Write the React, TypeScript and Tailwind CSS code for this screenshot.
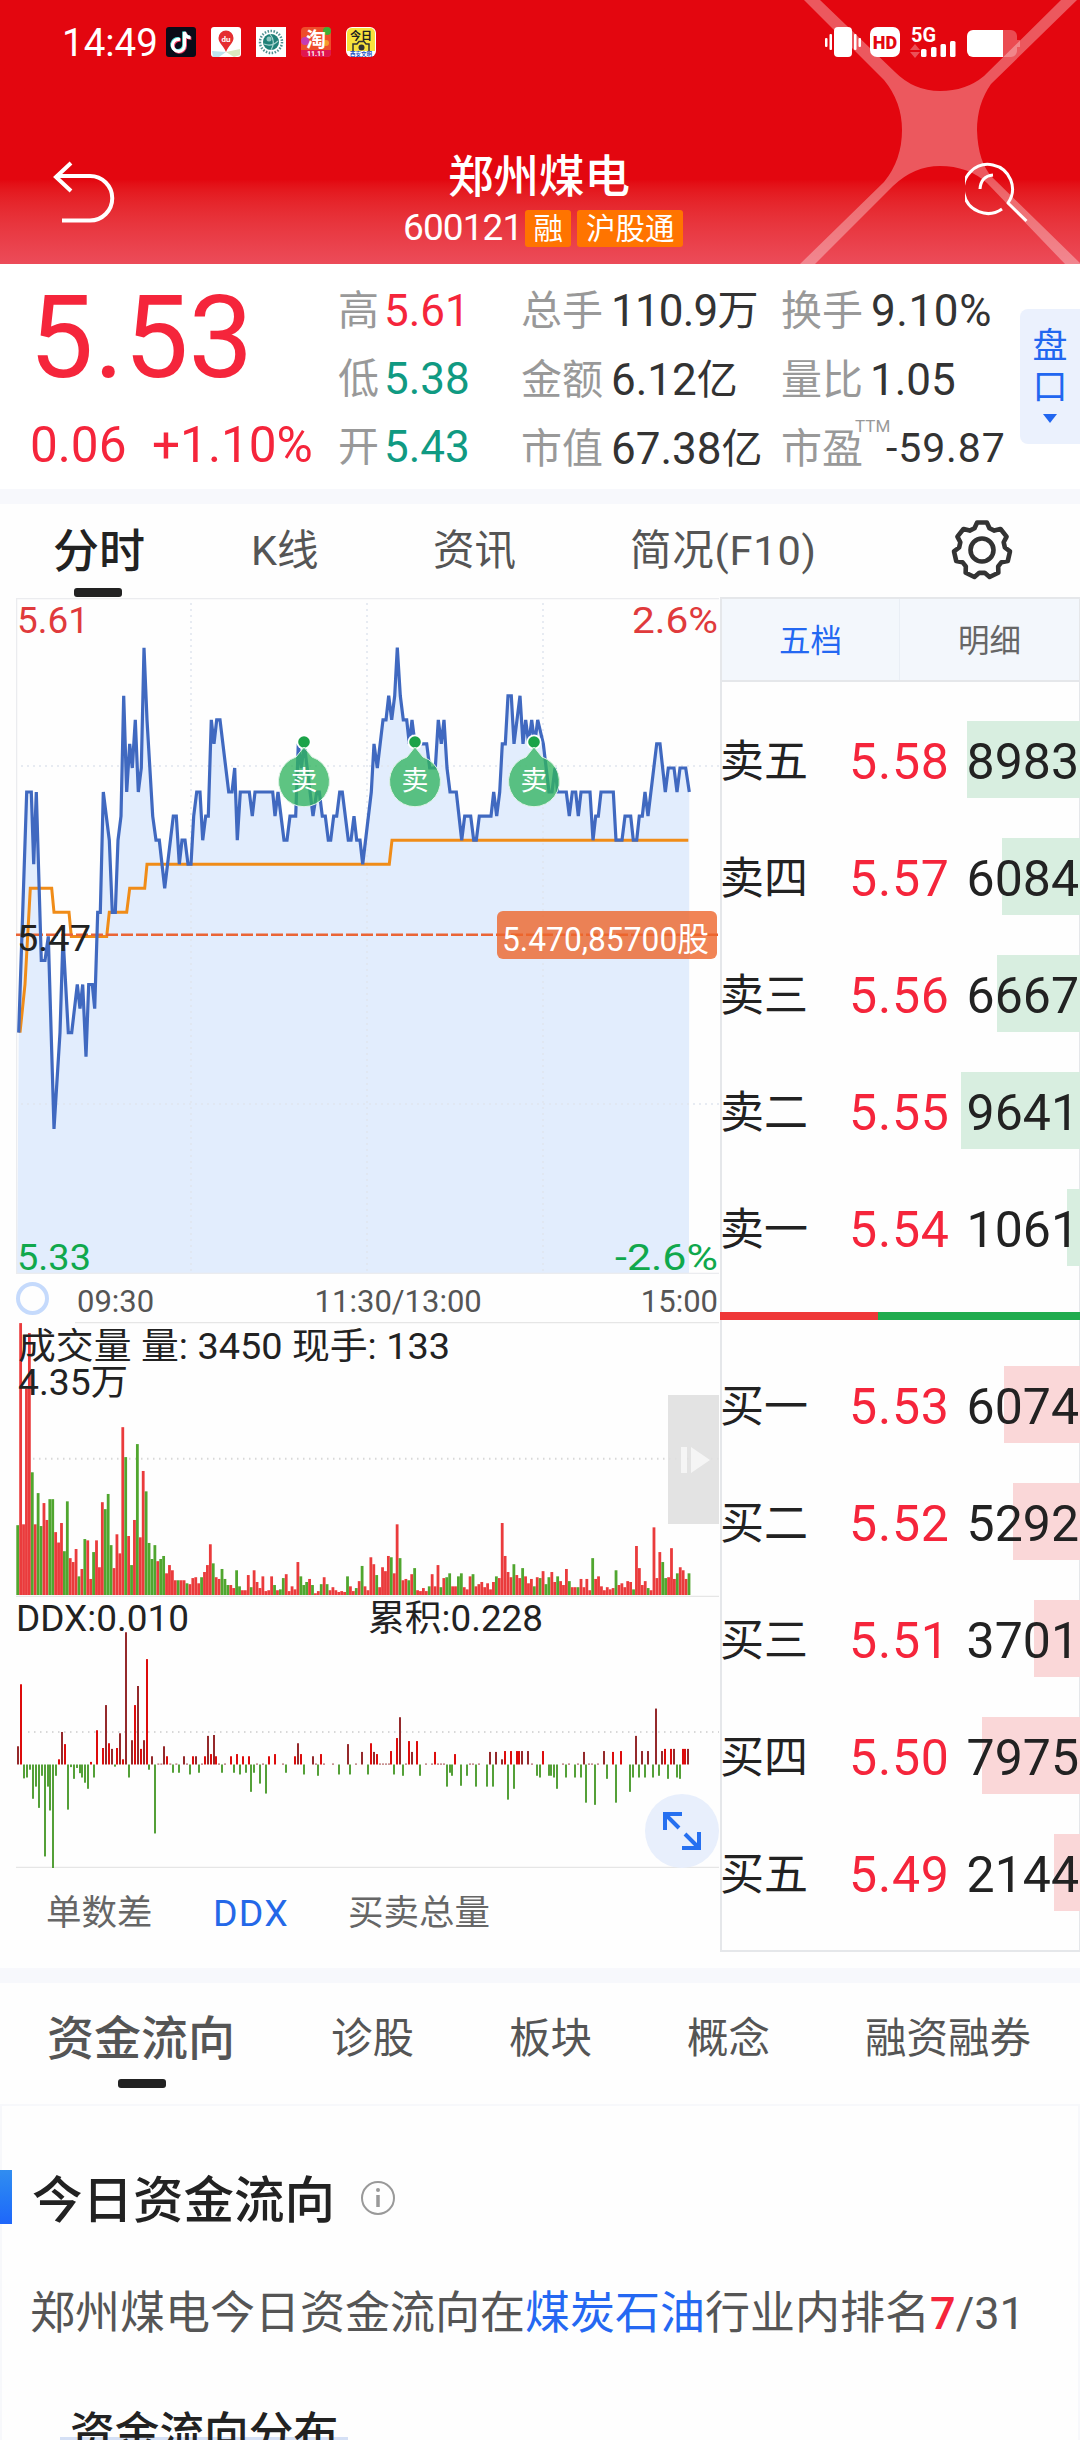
import { clsx } from "clsx";

// minute prices as [x, ticks above the previous close]
const price: [number, number][] = [
  [56, -4], [80, 6], [94, 6], [101, 3], [109, 6], [124, -1], [135, -1], [145, 0], [162, -8], [180, -4],
  [189, 0], [205, -4], [215, -4], [232, -2], [240, -3], [248, -2], [258, -5], [266, -2], [277, -2], [284, -3],
  [293, 1], [301, 1], [310, 6], [328, 4], [337, 1], [346, 1], [354, 4], [363, 5], [371, 10], [380, 6],
  [389, 8], [397, 7], [406, 9], [415, 6], [424, 7], [432, 12], [441, 9], [458, 5], [468, 4], [478, 4],
  [494, 2], [520, 5], [529, 5], [538, 3], [546, 4], [555, 4], [564, 3], [573, 3], [581, 5], [590, 6],
  [600, 6], [608, 4], [617, 5], [625, 5], [634, 9], [642, 8], [650, 9], [660, 9], [686, 6], [696, 6],
  [704, 7], [712, 4], [721, 6], [748, 6], [757, 5], [765, 6], [818, 6], [825, 5], [834, 6], [852, 4],
  [861, 4], [870, 5], [887, 5], [895, 8], [904, 7], [913, 8], [939, 5], [950, 6], [958, 6], [967, 5],
  [976, 5], [985, 4], [992, 4], [1001, 5], [1010, 5], [1019, 6], [1027, 6], [1045, 4], [1053, 4], [1062, 5],
  [1070, 4], [1080, 4], [1088, 3], [1114, 6], [1122, 8], [1132, 7], [1149, 9], [1158, 9], [1166, 10], [1175, 9],
  [1184, 10], [1192, 12], [1201, 10], [1210, 9], [1220, 9], [1228, 8], [1236, 9], [1245, 8], [1280, 8], [1289, 7],
  [1306, 7], [1315, 9], [1324, 8], [1332, 9], [1341, 7], [1350, 6], [1369, 6], [1385, 4], [1394, 5], [1412, 5],
  [1421, 4], [1429, 4], [1438, 5], [1473, 5], [1481, 6], [1490, 5], [1499, 6], [1507, 8], [1516, 8], [1524, 10],
  [1534, 10], [1542, 8], [1560, 10], [1569, 8], [1577, 9], [1586, 8], [1595, 9], [1604, 8], [1613, 9], [1630, 8],
  [1647, 6], [1656, 6], [1665, 7], [1673, 6], [1699, 6], [1708, 5], [1717, 6], [1727, 6], [1735, 5], [1743, 6],
  [1770, 6], [1779, 4], [1787, 5], [1795, 5], [1803, 6], [1840, 6], [1848, 4], [1866, 4], [1875, 5], [1892, 5],
  [1900, 4], [1910, 4], [1918, 5], [1927, 5], [1935, 6], [1944, 5], [1970, 8], [1980, 8], [1996, 6], [2005, 7],
  [2022, 7], [2031, 6], [2040, 7], [2057, 7], [2068, 6],
];

const average: [number, number][] = [
  [60, -4], [75, -2], [91, 2], [155, 2], [162, 1], [207, 1], [214, 0], [320, 0], [328, 1], [380, 1],
  [389, 2], [434, 2], [441, 3], [1168, 3], [1176, 4], [2065, 4],
];

// positive = red bar, negative = green bar
const volume = [
  -161, 627, 163, 476, 604, -283, 163, -235, -159, 212, 173, -221, -221, 145, 121, 166, -101, -216, 85, 76,
  106, -43, 60, -129, 126, 37, -99, 126, 64, 214, -198, -233, -115, 62, 140, 96, 387, -318, 136, -69,
  173, -348, 133, 286, -239, -120, -83, -115, 78, -83, -90, 50, 69, 57, 34, -34, 34, 34, -27, 25,
  39, 41, 27, -41, 53, 69, 117, -73, 41, 37, -60, -37, -23, 23, 16, -57, -20, 11, 11, 46,
  -18, 57, 30, 16, 43, 9, 11, 43, -23, 11, -13, -39, 48, 9, 20, 13, 76, -43, -23, -30,
  37, -23, 4, 9, -25, 41, -25, 11, 18, 11, 7, 9, 7, -43, 20, 9, -16, 32, -67, 20,
  11, 87, 71, -46, 18, 64, 55, 90, -87, 50, 163, -85, 34, 37, -34, 48, -62, 11, 9, 16,
  9, -20, 48, 20, 69, -18, 39, -41, -50, 20, 20, -43, -50, 18, 13, 43, -48, 20, 25, 30,
  18, 27, 13, 30, -43, 39, 166, 90, 53, 41, -71, 46, 39, -62, 43, 27, 37, -20, 41, -39,
  55, -25, -41, 53, 30, -43, 32, 23, 60, -32, 18, 18, -18, 37, 18, 37, 11, -85, 37, 43,
  20, 11, 18, 13, 16, -57, 23, 27, 18, 32, 30, -13, 113, 62, 23, 32, -16, 11, 156, 39,
  99, -76, -39, 41, 108, 37, -50, 64, 57, 37, -50,
];

const ddxStrong: [number, number][] = [
  [63, 185], [177, 12], [195, 47], [273, 6], [291, 79], [309, 38], [327, 49], [351, 38], [369, 12], [405, 137],
  [423, 36], [441, 243], [501, 19], [579, 19], [615, 19], [633, 24], [648, 19], [693, 19], [711, 24], [729, 19],
  [747, 19], [807, 19], [825, 24], [885, 19], [903, 24], [963, 24], [1113, 49], [1131, 24], [1173, 31], [1191, 61],
  [1227, 54], [1251, 54], [1305, 29], [1365, 24], [1515, 31], [1533, 31], [1551, 31], [1557, 31], [1629, 31],
  [1839, 29], [1863, 31], [1995, 36], [2013, 36], [2049, 36], [2055, 36],
];

const ddxWeak: [number, number][] = [
  [54, 42], [186, 75], [318, 137], [336, 36], [360, 72], [378, 305], [396, 56], [414, 181], [432, 56], [456, 19],
  [492, 42], [552, 19], [588, 19], [624, 66], [642, 68], [894, 49], [939, 19], [1044, 47], [1086, 29], [1122, 29],
  [1200, 109], [1236, 29], [1470, 29], [1488, 29], [1506, 12], [1566, 31], [1584, 31], [1752, 29], [1812, 31],
  [1908, 66], [1926, 31], [1944, 31], [1968, 129], [1986, 31], [2022, 36], [2064, 36],
  [475, 2], [484, 2], [511, 2], [529, 2], [561, 2], [606, 2], [657, 2], [675, 2], [771, 2], [789, 2], [849, 2],
  [948, 2], [972, 2], [999, 2], [1068, 2], [1140, 2], [1149, 2], [1158, 2], [1167, 2], [1218, 2], [1278, 2],
  [1296, 2], [1314, 2], [1323, 2], [1332, 2], [1410, 2], [1419, 2], [1437, 2], [1596, 2], [1689, 2], [1707, 2],
  [1734, 2], [1767, 2], [1776, 2], [1794, 2],
];

const ddxNegative: [number, number][] = [
  [72, 32], [81, 30], [90, 12], [99, 79], [108, 51], [117, 100], [126, 26], [135, 212], [144, 51], [150, 106],
  [159, 240], [168, 26], [204, 104], [213, 6], [222, 33], [231, 8], [240, 20], [246, 30], [255, 42], [264, 56],
  [282, 30], [345, 5], [387, 30], [447, 12], [465, 159], [519, 19], [537, 19], [570, 23], [597, 19], [666, 19],
  [702, 19], [720, 23], [738, 19], [753, 63], [762, 19], [780, 44], [798, 67], [858, 19], [912, 23], [954, 26],
  [1017, 23], [1050, 23], [1104, 23], [1182, 23], [1209, 26], [1260, 26], [1341, 51], [1350, 19], [1356, 26],
  [1383, 49], [1401, 26], [1428, 51], [1461, 51], [1479, 51], [1524, 81], [1542, 56], [1611, 26], [1620, 30],
  [1647, 26], [1653, 26], [1662, 30], [1671, 56], [1698, 30], [1725, 30], [1743, 30], [1758, 88], [1785, 93],
  [1821, 33], [1848, 88], [1890, 63], [1899, 30], [1917, 30], [1935, 30], [1959, 30], [1977, 26], [2004, 33],
  [2031, 30], [2040, 33],
];

const sells = [
  { label: "卖五", price: "5.58", lots: "8983", bar: 113 },
  { label: "卖四", price: "5.57", lots: "6084", bar: 78 },
  { label: "卖三", price: "5.56", lots: "6667", bar: 83 },
  { label: "卖二", price: "5.55", lots: "9641", bar: 119 },
  { label: "卖一", price: "5.54", lots: "1061", bar: 13 },
];

const buys = [
  { label: "买一", price: "5.53", lots: "6074", bar: 76 },
  { label: "买二", price: "5.52", lots: "5292", bar: 67 },
  { label: "买三", price: "5.51", lots: "3701", bar: 46 },
  { label: "买四", price: "5.50", lots: "7975", bar: 98 },
  { label: "买五", price: "5.49", lots: "2144", bar: 26 },
];

const toPoints = (series: [number, number][]) =>
  series.map(([x, t]) => `${(x / 3).toFixed(1)},${(936.4 - t * 24.06).toFixed(1)}`).join(" ");

const StatusBar = () => (
  <div className="flex h-[84px] items-center pl-[62px] text-white">
    <span className="w-[104px] pt-[3px] text-[38.500px] leading-none">14:49</span>
    <div className="flex gap-[15px]">
      <svg width="30" height="30" viewBox="0 0 30 30">
        <rect width="30" height="30" rx="3" fill="#0b0b18" />
        <g fill="none" strokeWidth="3.2">
          <path d="M14 12.500a6 6 0 1 0 4.500 6V5c.5 3.500 3 5.500 6 5.500" stroke="#ef3a5f" transform="translate(.9 .8)" />
          <path d="M14 12.500a6 6 0 1 0 4.500 6V5c.5 3.500 3 5.500 6 5.500" stroke="#4fe0e0" transform="translate(-.7 -.6)" />
          <path d="M14 12.500a6 6 0 1 0 4.500 6V5c.5 3.500 3 5.500 6 5.500" stroke="#fff" />
        </g>
      </svg>
      <svg width="30" height="30" viewBox="0 0 30 30">
        <rect width="30" height="30" rx="3" fill="#fff" />
        <path d="M1 24l14 1-7 5H2z" fill="#bfe3ee" />
        <path d="M15 25l14-3v6l-6 2z" fill="#dbe8c0" />
        <path d="M15 25C12 18 7.500 16 7.500 11a7.500 7.500 0 0 1 15 0c0 5-4.500 7-7.500 14z" fill="#e52d31" />
        <text x="15" y="14.500" fill="#fff" fontSize="8" fontWeight="700" textAnchor="middle">du</text>
      </svg>
      <svg width="30" height="30" viewBox="0 0 30 30">
        <rect width="30" height="30" fill="#fff" />
        <circle cx="15" cy="15" r="11" fill="none" stroke="#4f8f90" strokeWidth="2.500" strokeDasharray="1.500 1.500" />
        <circle cx="15" cy="15" r="8" fill="#1f8078" />
        <path d="M8 17c5 2 10 1 14-3M14 7c4 5 4 11 1 16" stroke="#a6d3ce" strokeWidth="1.200" fill="none" />
        <circle cx="13" cy="12" r="2.500" fill="#8fc7c1" />
      </svg>
      <svg width="30" height="30" viewBox="0 0 30 30">
        <rect width="30" height="30" rx="4" fill="#ee4d2b" />
        <circle cx="4" cy="14" r="4" fill="#c63bb4" />
        <circle cx="26" cy="4" r="4" fill="#3fae35" />
        <circle cx="25" cy="16" r="3" fill="#f59a2c" />
        <path d="M0 23h30v3a4 4 0 0 1-4 4H4a4 4 0 0 1-4-4z" fill="#e01550" />
        <text x="15" y="20" fill="#fff" fontSize="20" fontWeight="700" textAnchor="middle">淘</text>
        <text x="15" y="29" fill="#fff" fontSize="7" fontWeight="700" textAnchor="middle">11.11</text>
      </svg>
      <svg width="30" height="30" viewBox="0 0 30 30">
        <rect width="30" height="30" rx="6" fill="#fff" />
        <path d="M6 1h18a5 5 0 0 1 5 5v18H1V6a5 5 0 0 1 5-5z" fill="#f8e13c" />
        <text x="15" y="13" fill="#222" fontSize="11" fontWeight="700" textAnchor="middle">今日</text>
        <path d="M7 24v-7h4l2-2.500h5l2 2.500h3v7" fill="none" stroke="#333" strokeWidth="1.500" />
        <circle cx="15.500" cy="20.500" r="3" fill="#333" />
        <text x="15" y="29" fill="#1d55c4" fontSize="5.500" fontWeight="700" textAnchor="middle">西安文明</text>
      </svg>
    </div>
    <svg className="ml-[447px]" width="200" height="34" viewBox="823 25 200 34" fill="#fff">
      <rect x="825" y="38" width="2.500" height="9" rx="1" />
      <rect x="829.500" y="34" width="2.500" height="16" rx="1" />
      <rect x="834" y="27" width="18" height="30" rx="4" />
      <rect x="854" y="34" width="2.500" height="16" rx="1" />
      <rect x="858.500" y="38" width="2.500" height="9" rx="1" />
      <rect x="870" y="27" width="30" height="30" rx="7" />
      <text x="885" y="48.500" fill="#e3060f" fontSize="18" fontWeight="900" textAnchor="middle">HD</text>
      <text x="911" y="42" fontSize="19.500" fontWeight="700" textLength="25" lengthAdjust="spacingAndGlyphs">5G</text>
      <path d="M910 50l5-6 5 6zM910 52l5 6 5-6z" opacity=".3" />
      <rect x="921" y="49" width="5.500" height="8" rx="1.500" />
      <rect x="931" y="47" width="5.500" height="10" rx="1.500" />
      <rect x="940.500" y="44" width="5.500" height="13" rx="1.500" />
      <rect x="950" y="41" width="5.500" height="16" rx="1.500" />
      <path d="M1003 30h8a6 6 0 0 1 6 6v4h3v7h-3v4a6 6 0 0 1-6 6h-8z" opacity=".28" />
      <path d="M973 30h30v27h-30a6 6 0 0 1-6-6V36a6 6 0 0 1 6-6z" />
    </svg>
  </div>
);

const Header = () => (
  <header className="relative h-[264px] bg-linear-to-b from-[#e3060f] from-68% to-[#ec4b59]">
    <svg className="absolute top-0 left-0" width="1080" height="264" viewBox="0 0 1080 264">
      <path
        d="M804 0H820L895 72Q914 91 940 91Q966 91 984 76L1061 0H1077L991 84Q977 104 977 130Q978 162 992 177L1080 263V264H1065L987 183Q968 166 940 166Q914 166 893 186L815 264H800L884 182Q902 160 902 130Q902 102 884 80Z"
        fill="#fff"
        opacity=".33"
      />
    </svg>
    <div className="relative">
      <StatusBar />
      <div className="flex h-[180px] pl-[53px] text-white">
        <svg className="mt-[76px]" width="64" height="66" viewBox="53 160 64 66" fill="none" stroke="#fff" strokeWidth="4">
          <path d="M71 163L56 177L71 191M57 176H90A22.200 22.200 0 0 1 90 220.500H62" />
        </svg>
        <div className="ml-[287px] flex w-[300px] flex-col items-start pt-[68px] whitespace-nowrap">
          <h1 className="ml-[44px] text-[45.500px] leading-[52px] font-medium">郑州煤电</h1>
          <div className="mt-[5px] flex items-center text-[29.500px] leading-[38px]">
            <span className="mr-[3px] ml-[-1px] text-[37px] tracking-[-0.9px]">600121</span>
            <span className="mr-[6px] h-[37px] w-[46px] rounded-[3px] bg-[#ff7400] text-center">融</span>
            <span className="h-[37px] w-[106px] rounded-[3px] bg-[#ff7400] text-center">沪股通</span>
          </div>
        </div>
        <svg className="mt-[76px] ml-[261px]" width="64" height="66" viewBox="964 160 64 66" fill="none" stroke="#fff" strokeWidth="3">
          <path d="M1001 209A24.500 24.500 0 1 1 1007 203L1025.500 221M979 189Q980 176 992 175" strokeLinejoin="round" />
        </svg>
      </div>
    </div>
  </header>
);

const Quote = () => (
  <section className="flex h-[225px] bg-white">
    <div className="w-[338px] pl-[29px] text-[#f5253b]">
      <div className="mt-[11px] h-[126px] text-[115px] leading-[126px]">5.53</div>
      <div className="mt-[14px] ml-px flex text-[49.500px] leading-[60px]">
        <span className="w-[122px]">0.06</span>
        <span>+1.10%</span>
      </div>
    </div>
    <div className="w-[183px] pt-[13px] text-[44px] leading-[68px]">
      {[
        ["高", "5.61", "text-[#f5253b]"],
        ["低", "5.38", "text-[#109a82]"],
        ["开", "5.43", "text-[#109a82]"],
      ].map(([label, value, color]) => (
        <div key={label} className="flex">
          <span className="w-[46px] text-[41px] text-[#999]">{label}</span>
          <span className={color}>{value}</span>
        </div>
      ))}
    </div>
    <div className="w-[260px] pt-[13px] text-[44px] leading-[69px] text-[#333]">
      {[
        ["总手", "110.9", "万"],
        ["金额", "6.12", "亿"],
        ["市值", "67.38", "亿"],
      ].map(([label, value, unit]) => (
        <div key={label} className="flex">
          <span className="w-[90px] text-[41px] text-[#999]">{label}</span>
          <span className={value === "110.9" ? "tracking-[-0.8px]" : ""}>{value}</span>
          <span className="text-[41px]">{unit}</span>
        </div>
      ))}
    </div>
    <div className="w-[239px] pt-[13px] text-[44px] leading-[69px] whitespace-nowrap text-[#333]">
      <div className="flex">
        <span className="w-[90px] text-[41px] text-[#999]">换手</span>
        <span className="tracking-[0.6px]">9.10%</span>
      </div>
      <div className="flex">
        <span className="w-[89px] text-[41px] text-[#999]">量比</span>1.05
      </div>
      <div className="relative flex">
        <span className="w-[105px] text-[41px] text-[#999]">市盈</span>
        <span className="absolute top-[1px] left-[74px] text-[17px] leading-[20px] text-[#999]">TTM</span>
        <span className="text-[41px] leading-[66px] tracking-[0.9px]">-59.87</span>
      </div>
    </div>
    <div className="mt-[45px] flex h-[135px] w-[60px] flex-col items-center rounded-l-lg bg-[#ebf1fd] pt-[17px] text-[35px] leading-[41px] text-[#2166f0]">
      <span>盘</span>
      <span>口</span>
      <svg className="mt-[6px]" width="14" height="9" viewBox="0 0 14 9" fill="#2166f0">
        <path d="M0 0h14L7 9z" />
      </svg>
    </div>
  </section>
);

const Gear = () => {
  const teeth = Array.from({ length: 7 }, (_, k) =>
    [[-19, 23], [-10, 28], [10, 28], [19, 23]].map(([a, r]) => {
      const t = ((k * 360) / 7 - 90 + a) * (Math.PI / 180);
      return `${(31 + r * Math.cos(t)).toFixed(2)},${(31 + r * Math.sin(t)).toFixed(2)}`;
    }).join(" ")
  ).join(" ");
  return (
    <svg width="62" height="62" viewBox="0 0 62 62" fill="none" stroke="#333" strokeWidth="4.600" strokeLinejoin="round">
      <polygon points={teeth} />
      <circle cx="31" cy="31" r="11.500" />
    </svg>
  );
};

const ChartTabs = () => (
  <nav className="flex h-[93px] text-[41.500px] leading-[94px] text-[#555]">
    <div className="ml-[53px] flex w-[198px] flex-col">
      <span className="h-[84px] text-[46px] leading-[94px] font-medium text-[#222]">分时</span>
      <i className="ml-[21px] h-[9px] w-[48px] rounded-[3px] bg-[#222]" />
    </div>
    <span className="w-[182px]">K线</span>
    <span className="w-[197px]">资讯</span>
    <span className="w-[321px] tracking-[0.8px]">简况(F10)</span>
    <div className="pt-[15px]">
      <Gear />
    </div>
  </nav>
);

const SellMark = ({ x }: { x: number }) => (
  <g>
    <circle cx={x} cy="742" r="7.500" fill="#fff" />
    <circle cx={x} cy="742" r="5.800" fill="#1ba348" />
    <path d={`M${x - 8} 757L${x} 747L${x + 8} 757A25.500 25.500 0 1 1 ${x - 8} 757Z`} fill="#31b45f" fillOpacity=".78" stroke="#dff3e6" />
    <text x={x} y="790" fill="#fff" fontSize="27" textAnchor="middle">卖</text>
  </g>
);

const PriceChart = () => (
  <svg width="704" height="676" viewBox="16 598 704 676">
    <polygon points={`17,1273 ${toPoints(price)} 689,1273`} fill="#e2edfd" />
    <g stroke="#dfe5ee" strokeWidth="1.500" strokeDasharray="2 4">
      <path d="M191 603V1273M367 603V1273M543 603V1273M21 766H719M21 1104H719" />
    </g>
    <path d="M719 598.500H16.500V1273.500H719" fill="none" stroke="#ebecef" strokeWidth="1.500" />
    <polyline points={toPoints(average)} fill="none" stroke="#f08c18" strokeWidth="3" />
    <path d="M16 934.700H719" stroke="#ea6536" strokeWidth="2.500" strokeDasharray="12 3" />
    <polyline points={toPoints(price)} fill="none" stroke="#4069c0" strokeWidth="3.200" />
    <SellMark x={304} />
    <SellMark x={415} />
    <SellMark x={534} />
    <rect x="497" y="911" width="220" height="48" rx="6" fill="#ee652a" fillOpacity=".8" />
    <text x="502" y="950.500" fontSize="33" fill="#fff" textLength="207" lengthAdjust="spacingAndGlyphs">5.470,85700股</text>
    <g fontSize="36">
      <text x="17" y="633" fill="#e03a3c" textLength="72" lengthAdjust="spacingAndGlyphs">5.61</text>
      <text x="632" y="633" fill="#e03a3c" textLength="86" lengthAdjust="spacingAndGlyphs">2.6%</text>
      <text x="17" y="951" fill="#222" textLength="74" lengthAdjust="spacingAndGlyphs">5.47</text>
      <text x="17" y="1270" fill="#10a84c" textLength="74" lengthAdjust="spacingAndGlyphs">5.33</text>
      <text x="615" y="1270" fill="#10a84c" textLength="103" lengthAdjust="spacingAndGlyphs">-2.6%</text>
    </g>
  </svg>
);

const VolumeChart = () => (
  <svg width="704" height="275" viewBox="16 1322 704 275">
    <path d="M75 1322.500H719M16 1596.500H719" stroke="#e6e6e6" strokeWidth="1.500" />
    <path d="M33 1458.700H719" stroke="#d8d8d8" strokeWidth="2" strokeDasharray="1.500 4.500" />
    {volume.map((v, i) => {
      const h = Math.abs(v) / 2.306;
      return (
        <rect
          key={i}
          x={16.3 + (i * 671.3) / (volume.length - 1)}
          y={1595 - h}
          width="2.800"
          height={h}
          fill={v > 0 ? "#ea3b3c" : "#50a62f"}
        />
      );
    })}
    <g fill="#222" fontSize="36">
      <text x="18" y="1359" textLength="432" lengthAdjust="spacingAndGlyphs">成交量 量: 3450 现手: 133</text>
      <text x="18" y="1395" textLength="110" lengthAdjust="spacingAndGlyphs">4.35万</text>
    </g>
  </svg>
);

const DdxChart = () => (
  <svg width="704" height="271" viewBox="16 1597 704 271">
    <path d="M28 1732H719" stroke="#d8d8d8" strokeWidth="2" strokeDasharray="1.500 4.500" />
    <path d="M16 1867.500H719" stroke="#e6e6e6" strokeWidth="1.500" />
    {ddxStrong.map(([x, v]) => (
      <rect key={x} x={x / 3 - 1} y={1764.5 - v / 2.306} width="2" height={v / 2.306} fill="#dd0c0c" />
    ))}
    {ddxWeak.map(([x, v]) => (
      <rect key={x} x={x / 3 - 1} y={1764.5 - v / 2.306} width="2" height={v / 2.306} fill="#94292b" />
    ))}
    {ddxNegative.map(([x, v]) => (
      <rect key={x} x={x / 3 - 1} y="1764.500" width="2" height={v / 2.306} fill="#54a038" />
    ))}
    <g fill="#222" fontSize="36">
      <text x="16" y="1631" textLength="173" lengthAdjust="spacingAndGlyphs">DDX:0.010</text>
      <text x="368" y="1631" textLength="175" lengthAdjust="spacingAndGlyphs">累积:0.228</text>
    </g>
  </svg>
);

const Charts = () => (
  <div className="relative ml-4 w-[704px]">
    <PriceChart />
    <div className="flex h-[48px] items-center text-[31px] leading-none text-[#555]">
      <i className="h-[33px] w-[33px] rounded-full border-4 border-[#c5dafc]" />
      <span className="ml-[28px] pt-[7px]">09:30</span>
      <span className="ml-auto pt-[7px]">11:30/13:00</span>
      <span className="ml-[159px] pt-[7px] pr-[2px]">15:00</span>
    </div>
    <VolumeChart />
    <DdxChart />
    <div className="flex h-[84px] text-[35.500px] leading-[91px] text-[#666]">
      <span className="ml-[30px] w-[167px]">单数差</span>
      <span className="w-[135px] text-[37.500px] tracking-[1.2px] text-[#2468e8]">DDX</span>
      <span>买卖总量</span>
    </div>
    <button className="absolute top-[797px] left-[652px] flex h-[129px] w-[51px] items-center justify-center bg-[#e0e0e0]/90">
      <svg className="ml-1" width="30" height="26" viewBox="0 0 30 26" fill="#f5f5f5">
        <path d="M0 0h6v26H0zM10 0l19 13-19 13z" />
      </svg>
    </button>
    <button className="absolute top-[1196px] left-[629px] flex h-[74px] w-[74px] items-center justify-center rounded-full bg-[#e8effc]">
      <svg width="40" height="40" viewBox="0 0 40 40" fill="none" stroke="#2670f0" strokeWidth="4">
        <path d="M20 3H3V19M3 3L17 17M37 21V37H20M37 37L23 23" />
      </svg>
    </button>
  </div>
);

const BookRows = ({ rows, barColor }: { rows: typeof sells; barColor: string }) => (
  <div>
    {rows.map((row) => (
      <div key={row.label} className="relative flex h-[117px] items-center text-[50px] leading-[60px]">
        <i className={clsx("absolute right-[-1px] h-[77px]", barColor)} style={{ width: row.bar }} />
        <span className="relative -ml-[2px] w-[129px] pt-[4px] text-[44px] text-[#222]">{row.label}</span>
        <span className="relative pt-[4px] tracking-[0.8px] text-[#f5253b]">{row.price}</span>
        <span className="relative ml-auto pt-[4px] text-[#222]">{row.lots}</span>
      </div>
    ))}
  </div>
);

const OrderBook = () => (
  <div className="-mt-px h-[1355px] w-[360px] border-2 border-r-[1.500px] border-[#e5e7ea]">
    <div className="flex h-[83px] border-b-2 border-[#e5e7ea] bg-[#f3f7fc] text-center text-[31.500px] leading-[86px]">
      <span className="w-[178px] border-r border-[#e9eef5] text-[#2468f2]">五档</span>
      <span className="flex-1 text-[#666]">明细</span>
    </div>
    <div className="h-[19px]" />
    <BookRows rows={sells} barColor="bg-[#d8eee0]" />
    <div className="mt-[26px] mb-[26px] -ml-[2px] flex h-[8px] w-[360px]">
      <i className="w-[158px] bg-[#ef3738]" />
      <i className="flex-1 bg-[#20ac4e]" />
    </div>
    <BookRows rows={buys} barColor="bg-[#fad7d8]" />
  </div>
);

const InfoTabs = () => (
  <nav className="flex h-[121px] text-[41.500px] leading-[112px] text-[#555]">
    <div className="ml-[47px] flex w-[284px] flex-col">
      <span className="h-[96px] text-[47px] leading-[112px] font-medium">资金流向</span>
      <i className="ml-[71px] h-[9px] w-[48px] rounded-[3px] bg-[#222]" />
    </div>
    <span className="w-[178px]">诊股</span>
    <span className="w-[178px]">板块</span>
    <span className="w-[178px]">概念</span>
    <span>融资融券</span>
  </nav>
);

const CapitalFlow = () => (
  <section className="border-2 border-[#f7f8fb] text-[#222]">
    <div className="-ml-[2px] flex h-[120px] pt-[64px]">
      <i className="h-[54px] w-[12px] bg-linear-to-b from-[#318df0] to-[#1f66fa]" />
      <h2 className="ml-5 text-[50.500px] leading-[61px] font-medium">今日资金流向</h2>
      <svg className="mt-[10px] ml-[25px]" width="36" height="36" viewBox="0 0 36 36" fill="none" stroke="#999" strokeWidth="2">
        <circle cx="18" cy="18" r="16" />
        <path d="M18 15V27" strokeWidth="3.500" />
        <circle cx="18" cy="10" r="2" fill="#999" stroke="none" />
      </svg>
    </div>
    <p className="mt-[60px] ml-[28px] text-[45px] leading-[56px] whitespace-nowrap text-[#555]">
      郑州煤电今日资金流向在<span className="text-[#2468f2]">煤炭石油</span>行业内排名
      <span className="font-medium text-[#f5253b]">7</span>/31
    </p>
    <h3 className="mt-[64px] ml-[58px] w-[288px] bg-linear-to-b from-transparent from-[31px] to-[#d5e0f5] to-[31px] pl-[10px] text-[44.700px] leading-[56px] font-medium">
      资金流向分布
    </h3>
  </section>
);

export default function App() {
  return (
    <main className="h-[2440px] w-[1080px] overflow-hidden bg-[#fefefe] font-[Roboto,'Noto_Sans_CJK_SC',sans-serif]">
      <Header />
      <Quote />
      <div className="h-[15px] bg-[#f7f8fc]" />
      <ChartTabs />
      <div className="flex h-[1371px] pt-px">
        <Charts />
        <OrderBook />
      </div>
      <div className="h-[15px] bg-[#f7f8fc]" />
      <InfoTabs />
      <CapitalFlow />
    </main>
  );
}
